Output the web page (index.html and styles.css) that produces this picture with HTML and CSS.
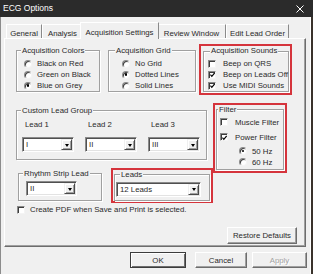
FILE: index.html
```html
<!DOCTYPE html>
<html>
<head>
<meta charset="utf-8">
<title>ECG Options</title>
<link rel="stylesheet" href="styles.css">
</head>
<body>
<div class="window">
  <div class="titlebar">
    <span class="title">ECG Options</span>
    <svg class="close" width="8" height="8" viewBox="0 0 8 8"><path d="M0.5 0.5L7.5 7.5M7.5 0.5L0.5 7.5" stroke="#ffffff" stroke-width="1"/></svg>
  </div>
  <div class="client">
    <div class="tabs">
      <div class="tab t-general">General</div>
      <div class="tab t-analysis">Analysis</div>
      <div class="tab active t-acq">Acquisition Settings</div>
      <div class="tab t-review">Review Window</div>
      <div class="tab t-edit">Edit Lead Order</div>
    </div>
    <div class="panel">
      <div class="row1">
        <fieldset class="group g-colors">
          <legend>Acquisition Colors</legend>
          <div class="opt"><span class="radio"></span><span class="lbl-r">Black on Red</span></div>
          <div class="opt"><span class="radio"></span><span class="lbl-r">Green on Black</span></div>
          <div class="opt"><span class="radio on"></span><span class="lbl-r">Blue on Grey</span></div>
        </fieldset>
        <fieldset class="group g-grid">
          <legend>Acquisition Grid</legend>
          <div class="opt"><span class="radio"></span><span class="lbl-r">No Grid</span></div>
          <div class="opt"><span class="radio on"></span><span class="lbl-r">Dotted Lines</span></div>
          <div class="opt"><span class="radio"></span><span class="lbl-r">Solid Lines</span></div>
        </fieldset>
        <div class="redbox r-sounds">
          <fieldset class="group g-sounds">
            <legend>Acquisition Sounds</legend>
            <div class="opt"><span class="check"></span><span class="lbl-c">Beep on QRS</span></div>
            <div class="opt"><span class="check on"><svg width="6" height="6" viewBox="0 0 6 6"><path d="M0.5 2.5L2.2 4.6L5.6 0.6" fill="none" stroke="#000" stroke-width="1.4"/></svg></span><span class="lbl-c">Beep on Leads Off</span></div>
            <div class="opt"><span class="check on"><svg width="6" height="6" viewBox="0 0 6 6"><path d="M0.5 2.5L2.2 4.6L5.6 0.6" fill="none" stroke="#000" stroke-width="1.4"/></svg></span><span class="lbl-c">Use MIDI Sounds</span></div>
          </fieldset>
        </div>
      </div>

      <div class="row2">
        <div class="leftcol">
          <fieldset class="group g-custom">
            <legend>Custom Lead Group</legend>
            <div class="leadgrid">
              <div class="leadcol"><span class="leadlbl">Lead 1</span><div class="combo"><span class="cval">I</span><span class="cbtn"><span class="tri"></span></span></div></div>
              <div class="leadcol"><span class="leadlbl">Lead 2</span><div class="combo"><span class="cval">II</span><span class="cbtn"><span class="tri"></span></span></div></div>
              <div class="leadcol"><span class="leadlbl">Lead 3</span><div class="combo"><span class="cval">III</span><span class="cbtn"><span class="tri"></span></span></div></div>
            </div>
          </fieldset>
          <div class="row3">
            <fieldset class="group g-rhythm">
              <legend>Rhythm Strip Lead</legend>
              <div class="combo c-rhythm"><span class="cval">II</span><span class="cbtn"><span class="tri"></span></span></div>
            </fieldset>
            <div class="redbox r-leads">
              <fieldset class="group g-leads">
                <legend>Leads</legend>
                <div class="combo c-leads"><span class="cval">12 Leads</span><span class="cbtn"><span class="tri"></span></span></div>
              </fieldset>
            </div>
          </div>
        </div>
        <div class="redbox r-filter">
          <fieldset class="group g-filter">
            <legend>Filter</legend>
            <div class="opt o-muscle"><span class="check"></span><span class="lbl-c">Muscle Filter</span></div>
            <div class="opt o-power"><span class="check on"><svg width="6" height="6" viewBox="0 0 6 6"><path d="M0.5 2.5L2.2 4.6L5.6 0.6" fill="none" stroke="#000" stroke-width="1.4"/></svg></span><span class="lbl-c">Power Filter</span></div>
            <div class="opt o-hz o-50"><span class="radio on"></span><span class="lbl-r">50 Hz</span></div>
            <div class="opt o-hz"><span class="radio"></span><span class="lbl-r">60 Hz</span></div>
          </fieldset>
        </div>
      </div>

      <div class="opt o-pdf"><span class="check"></span><span class="lbl-pdf">Create PDF when Save and Print is selected.</span></div>

      <div class="restore-row"><div class="btn b-restore">Restore Defaults</div></div>
    </div>
    <div class="buttons">
      <div class="btn b-ok">OK</div>
      <div class="btn b-cancel">Cancel</div>
      <div class="btn b-apply disabled">Apply</div>
    </div>
  </div>
</div>
</body>
</html>
```

FILE: styles.css
```css
* { box-sizing: border-box; }
html, body { margin: 0; padding: 0; }
body {
  width: 313px;
  height: 274px;
  overflow: hidden;
  background: #3a332c;
  font-family: "Liberation Sans", Arial, sans-serif;
  font-size: 7.8px;
  color: #2a2a2a;
}
.window {
  width: 313px;
  height: 274px;
  display: flex;
  flex-direction: column;
}
.titlebar {
  height: 17px;
  flex: none;
  background: #2b2b2b;
  color: #ffffff;
  display: flex;
  align-items: center;
  justify-content: space-between;
  padding: 0 9px 1px 3px;
}
.title { font-size: 8.5px; line-height: 10px; }
.close { display: block; margin-top: 2px; }

.client {
  width: 311px;
  flex: 1;
  background: #f0f0f0;
  border-left: 1px solid #8c8c8c;
  border-right: 1px solid #ffffff;
  padding: 5px 0 0 3px;
  display: flex;
  flex-direction: column;
}

/* tabs */
.tabs {
  height: 16px;
  display: flex;
  align-items: flex-end;
  padding-left: 2px;
  position: relative;
  z-index: 1;
}
.tab {
  height: 14px;
  border-top: 1px solid #ffffff;
  border-left: 1px solid #ffffff;
  border-right: 1px solid #8a8a8a;
  text-align: center;
  line-height: 9px;
  padding-top: 3.5px;
  white-space: nowrap;
  background: #f0f0f0;
}
.t-general { width: 36px; }
.t-analysis { width: 40px; }
.t-acq { width: 79px; }
.t-review { width: 69px; }
.t-edit { width: 63px; }
.tab.active {
  height: 17px;
  margin: 0 -2px -1px -2px;
  padding-top: 4.5px;
  position: relative;
  z-index: 2;
}
.t-analysis { border-right: none; }

.panel {
  width: 302px;
  height: 209px;
  border-top: 1px solid #ffffff;
  border-left: 1px solid #ffffff;
  border-right: 1px solid #6d6d6d;
  border-bottom: 1px solid #6d6d6d;
  box-shadow: inset -1px -1px #a0a0a0;
  display: flex;
  flex-direction: column;
}

/* group boxes */
fieldset.group {
  margin: 0;
  padding: 0;
  min-width: 0;
  border: 1px solid #a0a0a0;
  box-shadow: inset 1px 1px #ffffff, 1px 1px #ffffff;
}
fieldset.group legend {
  padding: 0 1px;
  margin-left: 4px;
  line-height: 9px;
  background: #f0f0f0;
  white-space: nowrap;
}

.opt {
  height: 11px;
  display: flex;
  align-items: center;
  white-space: nowrap;
}
.radio {
  width: 8px;
  height: 8px;
  flex: none;
  border-radius: 50%;
  background: #ffffff;
  border: 1px solid;
  border-color: #8a8a8a #f4f4f4 #f4f4f4 #8a8a8a;
  box-shadow: inset 1px 1px #3c3c3c;
  display: flex;
  align-items: center;
  justify-content: center;
}
.radio.on::after {
  content: "";
  width: 2.5px;
  height: 2.5px;
  border-radius: 50%;
  background: #000;
}
.check {
  width: 8px;
  height: 8px;
  flex: none;
  background: #ffffff;
  border: 1px solid;
  border-color: #8a8a8a #f4f4f4 #f4f4f4 #8a8a8a;
  box-shadow: inset 1px 1px #3c3c3c;
  display: flex;
  align-items: center;
  justify-content: center;
}
.check svg { display: block; margin: 1px 0 0 1px; }
.lbl-r { margin-left: 5px; }
.lbl-c { margin-left: 7px; }

.row1 {
  display: flex;
  align-items: flex-start;
  margin-top: 5px;
}
.g-colors {
  margin-left: 11px !important;
  margin-top: 2px !important;
  width: 84px;
  height: 46px;
  padding: 3px 0 0 7px !important;
}
.g-grid {
  margin-left: 8px !important;
  margin-top: 2px !important;
  width: 88px;
  height: 46px;
  padding: 3px 0 0 13px !important;
}
.g-grid legend { margin-left: -7px !important; }
.g-colors legend { margin-left: -3px !important; }

.redbox {
  border: 2px solid #d5343c;
  flex: none;
}
.r-sounds {
  margin-left: 3px;
  width: 93px;
  height: 51px;
}
.g-sounds {
  margin-left: 2px !important;
  margin-top: 1px !important;
  width: 86px;
  height: 45px;
  padding: 3px 0 0 4px !important;
}
.g-sounds legend { margin-left: 2px !important; line-height: 8px !important; }

.row2 {
  display: flex;
  align-items: flex-start;
  margin-top: 8px;
}
.leftcol {
  width: 208px;
  flex: none;
  display: flex;
  flex-direction: column;
}
.g-custom {
  margin-left: 11px !important;
  margin-top: 3px !important;
  width: 191px;
  height: 54px;
  padding: 0 0 0 5px !important;
}
.g-custom legend { margin-left: -1px !important; }
.leadgrid {
  display: grid;
  grid-template-columns: 63px 63px 63px;
  margin-top: 4.5px;
}
.leadcol { display: flex; flex-direction: column; }
.leadlbl { line-height: 9px; margin-left: 3px; height: 9px; }

.combo {
  width: 52px;
  height: 15px;
  margin-top: 8.5px;
  background: #ffffff;
  border: 1px solid;
  border-color: #8a8a8a #ffffff #ffffff #8a8a8a;
  box-shadow: inset 1px 1px #505050, inset -1px -1px #e3e3e3;
  display: flex;
  align-items: stretch;
  padding: 1px;
}
.cval {
  flex: 1;
  line-height: 11px;
  padding-left: 2px;
  white-space: nowrap;
  overflow: hidden;
}
.cbtn {
  width: 11px;
  flex: none;
  background: #f0f0f0;
  border-top: 1px solid #f0f0f0;
  border-left: 1px solid #f0f0f0;
  border-right: 1px solid #4a4a4a;
  border-bottom: 1px solid #4a4a4a;
  box-shadow: inset 1px 1px #ffffff, inset -1px -1px #a0a0a0;
  display: flex;
  align-items: center;
  justify-content: center;
}
.tri {
  width: 0;
  height: 0;
  border-left: 2.5px solid transparent;
  border-right: 2.5px solid transparent;
  border-top: 3px solid #000;
  margin-top: 1px;
}

.row3 {
  display: flex;
  align-items: flex-start;
  margin-top: 8px;
}
.g-rhythm {
  margin-left: 13px !important;
  margin-top: 0.5px !important;
  width: 84px;
  height: 32px;
  padding: 0 0 0 7px !important;
}
.g-rhythm legend { margin-left: -3px !important; }
.c-rhythm { width: 51px; margin-top: 3.5px; }

.r-leads {
  margin-left: 9px;
  width: 102px;
  height: 35px;
}
.g-leads {
  margin-left: 1px !important;
  margin-top: 0.5px !important;
  width: 96px;
  height: 30.5px;
  padding: 0 0 0 1px !important;
}
.g-leads legend { margin-left: 4px !important; line-height: 7px !important; }
.c-leads { width: 85px; margin-top: 4px; }

.r-filter {
  width: 74px;
  height: 70px;
}
.g-filter {
  margin-left: 1px !important;
  margin-top: 0.5px !important;
  width: 68px;
  height: 64.5px;
  padding: 0 0 0 3px !important;
}
.g-filter legend { margin-left: -2px !important; line-height: 7px !important; }
.o-muscle { margin-top: 4px; }
.o-power { margin-top: 4px; }
.o-50 { margin-top: 3px; }
.o-hz { padding-left: 19px; }

.o-pdf {
  margin-top: 1px;
  margin-left: 12px;
}
.lbl-pdf { margin-left: 5px; }

.restore-row {
  display: flex;
  justify-content: flex-end;
  margin-top: 12px;
  padding-right: 8px;
}

.btn {
  height: 17px;
  border: 1px solid;
  border-color: #ffffff #6d6d6d #6d6d6d #ffffff;
  box-shadow: inset -1px -1px #a0a0a0;
  display: flex;
  align-items: center;
  justify-content: center;
  white-space: nowrap;
  background: #f0f0f0;
}
.b-restore { width: 70px; }

.buttons {
  display: flex;
  margin-top: 5px;
  padding-left: 126px;
}
.buttons .btn { height: 16px; }
.b-ok { width: 56px; border-color: #3c3c3c; box-shadow: inset 1px 1px #ffffff, inset -1px -1px #6d6d6d; }
.b-cancel { width: 52px; margin-left: 9px; }
.b-apply { width: 55px; margin-left: 5px; }
.btn.disabled { color: #a3a3a3; text-shadow: 1px 1px #ffffff; }
```
